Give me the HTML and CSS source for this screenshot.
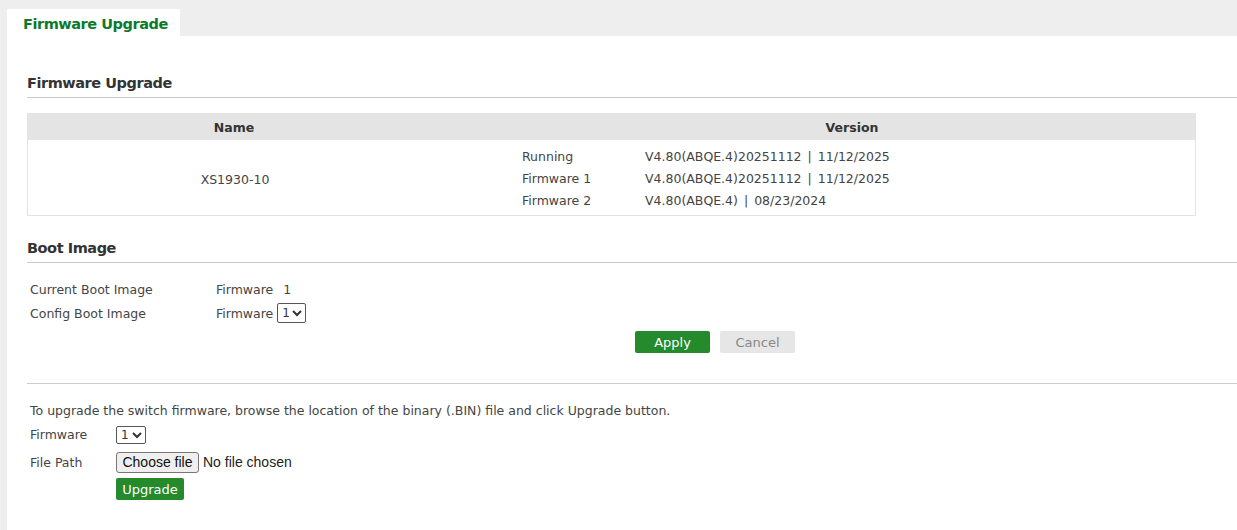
FILE: index.html
```html
<!DOCTYPE html>
<html>
<head>
<meta charset="utf-8">
<link rel="stylesheet" href="styles.css">
</head>
<body>
<div class="page">
  <div class="tabs">
    <div class="tab">Firmware Upgrade</div>
  </div>
  <div class="content">
    <div class="section-title first">Firmware Upgrade</div>
    <div class="fw-table">
      <div class="fw-head">
        <div class="col-name">Name</div>
        <div class="col-gap"></div>
        <div class="col-version">Version</div>
      </div>
      <div class="fw-body">
        <div class="col-name name-cell">XS1930-10</div>
        <div class="ver-list">
          <div class="ver-row"><span class="ver-label">Running</span><span>V4.80(ABQE.4)20251112<span class="sep">|</span>11/12/2025</span></div>
          <div class="ver-row"><span class="ver-label">Firmware 1</span><span>V4.80(ABQE.4)20251112<span class="sep">|</span>11/12/2025</span></div>
          <div class="ver-row"><span class="ver-label">Firmware 2</span><span>V4.80(ABQE.4)<span class="sep">|</span>08/23/2024</span></div>
        </div>
      </div>
    </div>

    <div class="section-title second">Boot Image</div>
    <div class="boot">
      <div class="form-row"><span class="label">Current Boot Image</span><span class="value">Firmware<span class="num">1</span></span></div>
      <div class="form-row"><span class="label">Config Boot Image</span><span class="value">Firmware<select class="sel sel-boot"><option>1</option><option>2</option></select></span></div>
    </div>
    <div class="actions">
      <button class="btn btn-apply">Apply</button>
      <button class="btn btn-cancel">Cancel</button>
    </div>

    <div class="divider"></div>

    <div class="upgrade">
      <div class="hint">To upgrade the switch firmware, browse the location of the binary (.BIN) file and click Upgrade button.</div>
      <div class="up-row fw-row"><span class="up-label">Firmware</span><select class="sel sel-up"><option>1</option><option>2</option></select></div>
      <div class="up-row file-row"><span class="up-label">File Path</span><label class="file-wrap"><span class="file-btn">Choose file</span><span class="file-name">No file chosen</span><input type="file" class="file-input"></label></div>
      <div class="up-row btn-row"><span class="up-label"></span><button class="btn btn-upgrade">Upgrade</button></div>
    </div>
  </div>
</div>
</body>
</html>
```

FILE: styles.css
```css
html, body {
  margin: 0;
  padding: 0;
  background: #eeeeee;
  height: 100%;
}
body {
  font-family: "DejaVu Sans", "Liberation Sans", sans-serif;
  font-size: 12.5px;
  color: #444;
}
.page {
  padding-left: 7px;
  height: 530px;
  display: flex;
  flex-direction: column;
}
.tabs {
  height: 36px;
  display: flex;
  align-items: flex-end;
}
.tab {
  background: #fff;
  width: 157px;
  height: 27px;
  padding-left: 16px;
  line-height: 31px;
  color: #0b7a2c;
  font-weight: bold;
  font-size: 14.5px;
  letter-spacing: -0.45px;
}
.content {
  background: #fff;
  flex: 1;
  padding-left: 20px;
}
.section-title {
  font-size: 14.5px;
  font-weight: bold;
  color: #333;
  line-height: 20px;
  padding-top: 1px;
  padding-bottom: 4px;
  border-bottom: 1px solid #cccccc;
  letter-spacing: -0.45px;
}
.section-title.first { margin-top: 36px; }
.section-title.second { margin-top: 21px; }

.fw-table {
  width: 1169px;
  margin-top: 15px;
}
.fw-head {
  display: flex;
  background: #e4e4e4;
  height: 27px;
  line-height: 29px;
  font-weight: bold;
  color: #333;
}
.col-name {
  width: 414px;
  text-align: center;
}
.col-gap { width: 67px; }
.col-version {
  flex: 1;
  text-align: center;
}
.fw-body {
  display: flex;
  border: 1px solid #e2e2e2;
  border-top: none;
  padding: 5px 0 4px 0;
}
.name-cell {
  display: flex;
  align-items: center;
  justify-content: center;
  padding-top: 2px;
}
.ver-list {
  padding-left: 80px;
}
.ver-row {
  height: 22px;
  line-height: 24px;
  display: flex;
}
.ver-label {
  width: 123px;
}
.sep {
  margin: 0 6px;
}

.boot {
  margin-top: 14px;
  padding-left: 3px;
}
.form-row {
  height: 24px;
  display: flex;
  align-items: center;
}
.label {
  width: 186px;
}
.value {
  display: flex;
  align-items: center;
}
.num { margin-left: 10px; }

.sel {
  font-family: "DejaVu Sans", sans-serif;
  font-size: 12px;
  color: #333;
  border: 1px solid #555;
  border-radius: 2px;
  background: #fff;
  padding: 0;
}
.sel-boot {
  margin-left: 4px;
  width: 29px;
  height: 20px;
}
.sel-up {
  width: 30px;
  height: 18px;
}

.actions {
  margin-top: 6px;
  padding-left: 608px;
  display: flex;
  gap: 10px;
}
.btn {
  font-family: "DejaVu Sans", sans-serif;
  font-size: 13px;
  border: none;
  border-radius: 2px;
  height: 22px;
  padding: 0;
  cursor: pointer;
}
.btn-apply {
  width: 75px;
  background: #248a2b;
  color: #fff;
}
.btn-cancel {
  width: 75px;
  background: #e6e6e6;
  color: #888;
}

.divider {
  margin-top: 30px;
  border-top: 1px solid #cccccc;
}

.upgrade {
  padding-left: 3px;
}
.hint {
  margin-top: 17px;
  height: 20px;
  line-height: 20px;
}
.up-row {
  display: flex;
  align-items: center;
  height: 24px;
}
.fw-row { height: 27px; }
.file-row { height: 28px; }
.up-label {
  width: 86px;
}
.file-wrap {
  display: flex;
  align-items: center;
  font-family: "Liberation Sans", Arial, sans-serif;
  font-size: 14px;
  color: #222;
}
.file-btn {
  display: inline-block;
  box-sizing: border-box;
  width: 83px;
  height: 21px;
  line-height: 19px;
  text-align: center;
  background: #efefef;
  border: 1px solid #767676;
  border-radius: 3px;
  color: #111;
}
.file-name {
  margin-left: 4px;
}
.file-input {
  display: none;
}
.btn-row { height: 26px; }
.btn-upgrade {
  width: 68px;
  background: #248a2b;
  color: #fff;
  font-size: 13px;
}
```
